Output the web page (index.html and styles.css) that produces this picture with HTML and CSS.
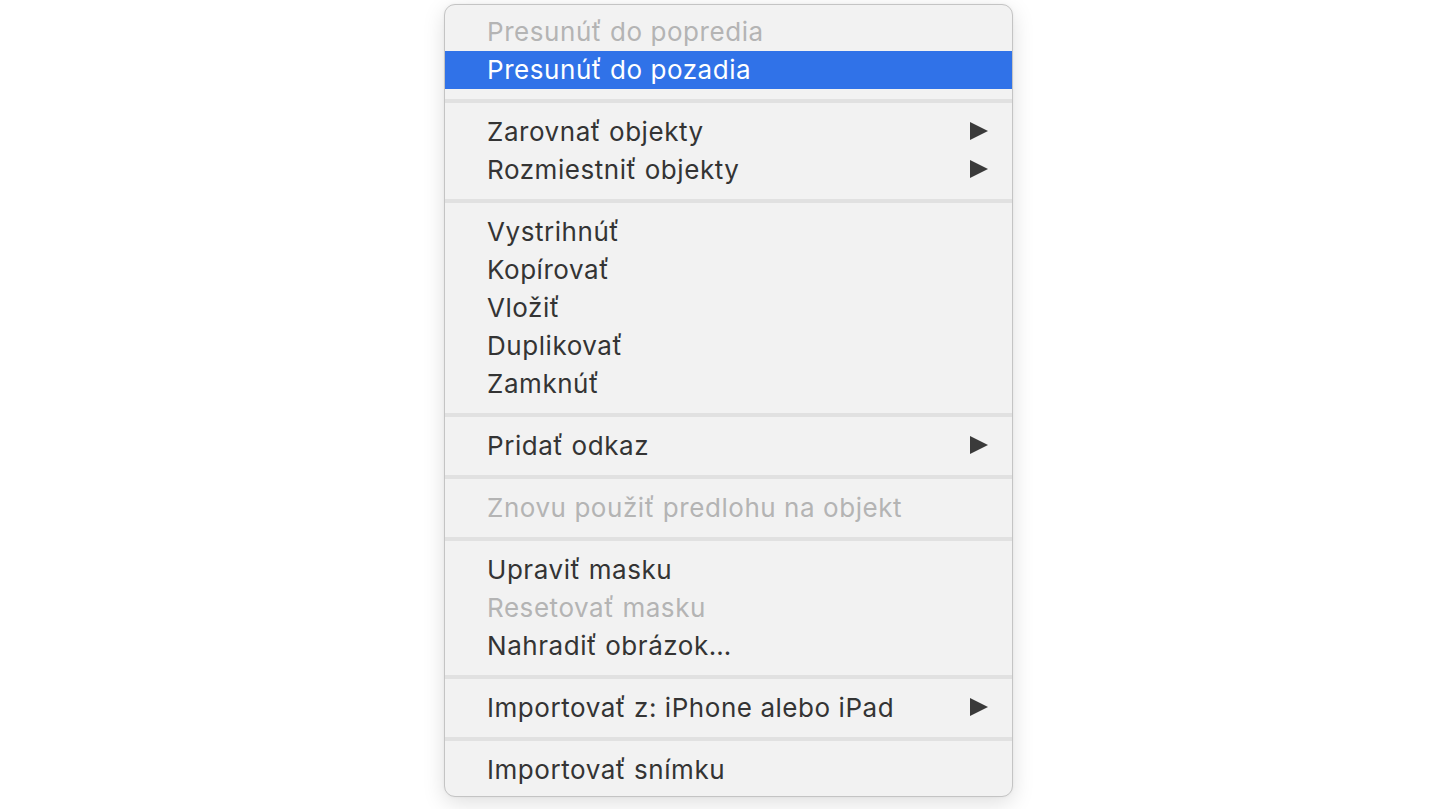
FILE: index.html
```html
<!DOCTYPE html>
<html lang="sk">
<head>
<meta charset="utf-8">
<title>Menu</title>
<link rel="stylesheet" href="styles.css">
</head>
<body>
<div class="stage">
  <div class="menu">
    <div class="item disabled">Presunúť do popredia</div>
    <div class="item active">Presunúť do pozadia</div>
    <div class="sep"></div>
    <div class="item">Zarovnať objekty<span class="arrow"></span></div>
    <div class="item">Rozmiestniť objekty<span class="arrow"></span></div>
    <div class="sep"></div>
    <div class="item">Vystrihnúť</div>
    <div class="item">Kopírovať</div>
    <div class="item">Vložiť</div>
    <div class="item">Duplikovať</div>
    <div class="item">Zamknúť</div>
    <div class="sep"></div>
    <div class="item">Pridať odkaz<span class="arrow"></span></div>
    <div class="sep"></div>
    <div class="item disabled">Znovu použiť predlohu na objekt</div>
    <div class="sep"></div>
    <div class="item">Upraviť masku</div>
    <div class="item disabled">Resetovať masku</div>
    <div class="item">Nahradiť obrázok…</div>
    <div class="sep"></div>
    <div class="item">Importovať z: iPhone alebo iPad<span class="arrow"></span></div>
    <div class="sep"></div>
    <div class="item">Importovať snímku</div>
  </div>
</div>
</body>
</html>
```
FILE: styles.css
```css
html, body {
  margin: 0;
  padding: 0;
  background: #ffffff;
  height: 100%;
  overflow: hidden;
}
.stage {
  padding: 4px 0 0 444px;
}
.menu {
  width: 567px;
  background: #f2f2f2;
  border: 1px solid #c4c4c4;
  border-radius: 11px;
  box-shadow: 0 6px 22px rgba(0,0,0,0.13), 0 0 3px rgba(0,0,0,0.05);
  padding: 8px 0 7px 0;
  font-family: "Inter", "Noto Sans", sans-serif;
  font-size: 26px;
  color: #343434;
  letter-spacing: 0.55px;
}
.item {
  box-sizing: border-box;
  height: 38px;
  display: flex;
  align-items: center;
  justify-content: space-between;
  padding: 0 24px 2px 42px;
  white-space: nowrap;
}
.item.disabled {
  color: #b4b4b4;
}
.item.active {
  background: #3072e8;
  color: #ffffff;
}
.arrow {
  width: 0;
  height: 0;
  border-top: 9.5px solid transparent;
  border-bottom: 9.5px solid transparent;
  border-left: 18px solid #3a3a3a;
}
.sep {
  height: 4px;
  margin: 10px 0;
  background: #e1e1e1;
}
```
